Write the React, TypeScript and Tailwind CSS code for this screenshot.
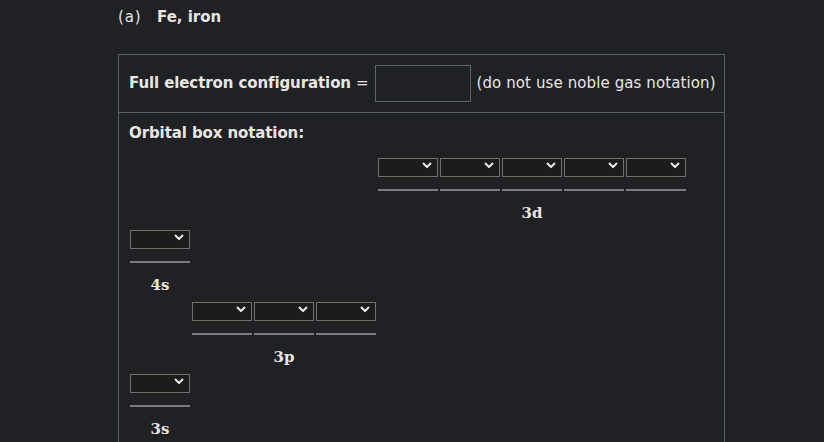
import React from "react";

type Orbital = {
  name: string;
  boxes: number;
  offset: string;
};

// staircase order, as drawn on the worksheet
const orbitals: Orbital[] = [
  { name: "3d", boxes: 5, offset: "ml-[248px]" },
  { name: "4s", boxes: 1, offset: "ml-0" },
  { name: "3p", boxes: 3, offset: "ml-[62px]" },
  { name: "3s", boxes: 1, offset: "ml-0" },
];

function Chevron() {
  return (
    <svg
      className="pointer-events-none absolute right-[6px] top-1/2 -translate-y-1/2"
      width="10"
      height="7"
      viewBox="0 0 10 7"
      fill="none"
    >
      <path d="M1 1.5 L5 5.5 L9 1.5" stroke="#e8e6e3" strokeWidth="2" />
    </svg>
  );
}

function SpinSelect() {
  return (
    <div className="relative w-[60px] h-[19px]">
      <select
        defaultValue=""
        className="appearance-none w-full h-full bg-[#1b1c1e] border border-[#776f66] text-[#e8e6e3] text-xs outline-none"
      >
        <option value=""></option>
        <option value="up">↑</option>
        <option value="down">↓</option>
        <option value="pair">↑↓</option>
      </select>
      <Chevron />
    </div>
  );
}

function OrbitalBlock({ orbital }: { orbital: Orbital }) {
  const boxes = Array.from({ length: orbital.boxes });
  return (
    <div className={`flex flex-col w-fit ${orbital.offset}`}>
      <div className="flex gap-[2px]">
        {boxes.map((_, i) => (
          <SpinSelect key={i} />
        ))}
      </div>
      <div className="flex gap-[2px] mt-[15px]">
        {boxes.map((_, i) => (
          <div key={i} className="w-[60px] h-[2px] bg-[#7b7b7b]" />
        ))}
      </div>
      <div className="mt-[13px] mb-[5px] h-[18px] leading-[18px] text-center font-bold text-[15px] text-[#e8e6e3] font-['DejaVu_Serif',serif]">
        {orbital.name}
      </div>
    </div>
  );
}

export default function App() {
  return (
    <div className="h-screen overflow-hidden w-full bg-[#202124] text-[#e8e6e3] font-['DejaVu_Sans',Verdana,sans-serif] text-[15px]">
      <div className="pl-[118px] pt-[8px]">
        <h3 className="h-[18px] leading-[18px] flex">
          <span className="w-[39px] tracking-[0.8px]">(a)</span>
          <span className="font-bold">Fe, iron</span>
        </h3>

        <div className="mt-[28px] w-[607px] border border-[#5a5f60]">
          <div className="h-[58px] pl-[10px] flex items-center whitespace-nowrap border-b border-[#5a5f60]">
            <span className="font-bold shrink-0 tracking-[-0.1px]">Full electron configuration</span>
            <span className="ml-[5px] shrink-0">=</span>
            <input
              type="text"
              className="ml-[6px] shrink-0 w-[96px] h-[37px] bg-transparent border border-[#5f6566] outline-none"
            />
            <span className="ml-[6px] shrink-0 tracking-[0.1px]">(do not use noble gas notation)</span>
          </div>

          <div className="px-[10px] pt-[11px] pb-[40px]">
            <div className="h-[18px] leading-[18px] font-bold tracking-[-0.1px]">Orbital box notation:</div>
            <div className="mt-[13px] ml-[1px] flex flex-col">
              {orbitals.map((o) => (
                <OrbitalBlock key={o.name} orbital={o} />
              ))}
            </div>
          </div>
        </div>
      </div>
    </div>
  );
}
